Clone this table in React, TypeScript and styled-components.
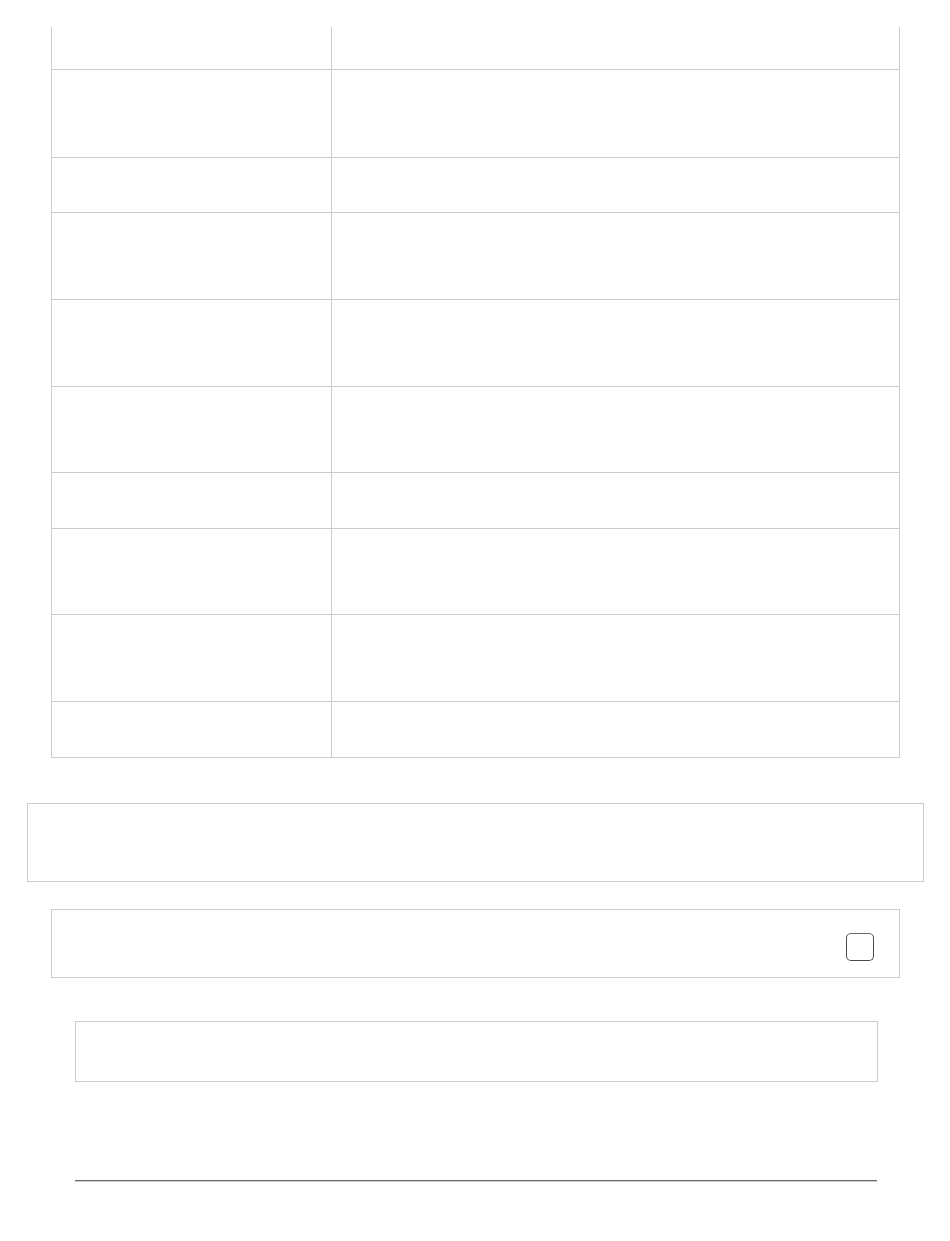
import React from "react";
import styled, { createGlobalStyle } from "styled-components";

const Global = createGlobalStyle`
  html, body { margin: 0; padding: 0; background: #fff; }
  body { font-family: "Liberation Sans", Arial, sans-serif; color: #222; }
  * { box-sizing: border-box; }
`;

const Page = styled.div`
  display: flex;
  flex-direction: column;
  padding-top: 27px;
  padding-bottom: 60px;
`;

const Table = styled.div`
  margin-left: 51px;
  width: 849px;
  border-left: 1px solid #cccccc;
  border-right: 1px solid #cccccc;
  border-bottom: 1px solid #cccccc;
`;

const Row = styled.div<{ $h: number; $first?: boolean }>`
  display: grid;
  grid-template-columns: 280px 1fr;
  height: ${(p) => p.$h}px;
  border-top: ${(p) => (p.$first ? "none" : "1px solid #cccccc")};
`;

const LabelCell = styled.div`
  border-right: 1px solid #cccccc;
`;

const ValueCell = styled.div``;

const Panel = styled.div<{ $left: number; $width: number; $height: number; $top: number }>`
  margin-left: ${(p) => p.$left}px;
  margin-top: ${(p) => p.$top}px;
  width: ${(p) => p.$width}px;
  height: ${(p) => p.$height}px;
  border: 1px solid #cccccc;
`;

const CheckPanel = styled(Panel)`
  display: flex;
  justify-content: flex-end;
  align-items: flex-start;
  padding-top: 23px;
  padding-right: 25px;
`;

const CheckBox = styled.span`
  display: block;
  width: 28px;
  height: 28px;
  border: 1.5px solid #4a4a4a;
  border-top-color: #6a6a6a;
  border-radius: 5px;
  background: #fff;
`;

const Rule = styled.hr`
  margin: 98px 0 0 75px;
  width: 802px;
  height: 0;
  border: none;
  border-top: 1px solid #666666;
  border-bottom: 1px solid #cfcfcf;
`;

const rows = [42, 88, 55, 87, 87, 86, 56, 86, 87, 56];

export default function App() {
  return (
    <>
      <Global />
      <Page>
        <Table>
          {rows.map((h, i) => (
            <Row key={i} $h={h} $first={i === 0}>
              <LabelCell />
              <ValueCell />
            </Row>
          ))}
        </Table>
        <Panel $left={27} $width={897} $height={79} $top={45} />
        <CheckPanel $left={51} $width={849} $height={69} $top={27}>
          <CheckBox />
        </CheckPanel>
        <Panel $left={75} $width={803} $height={61} $top={43} />
        <Rule />
      </Page>
    </>
  );
}
